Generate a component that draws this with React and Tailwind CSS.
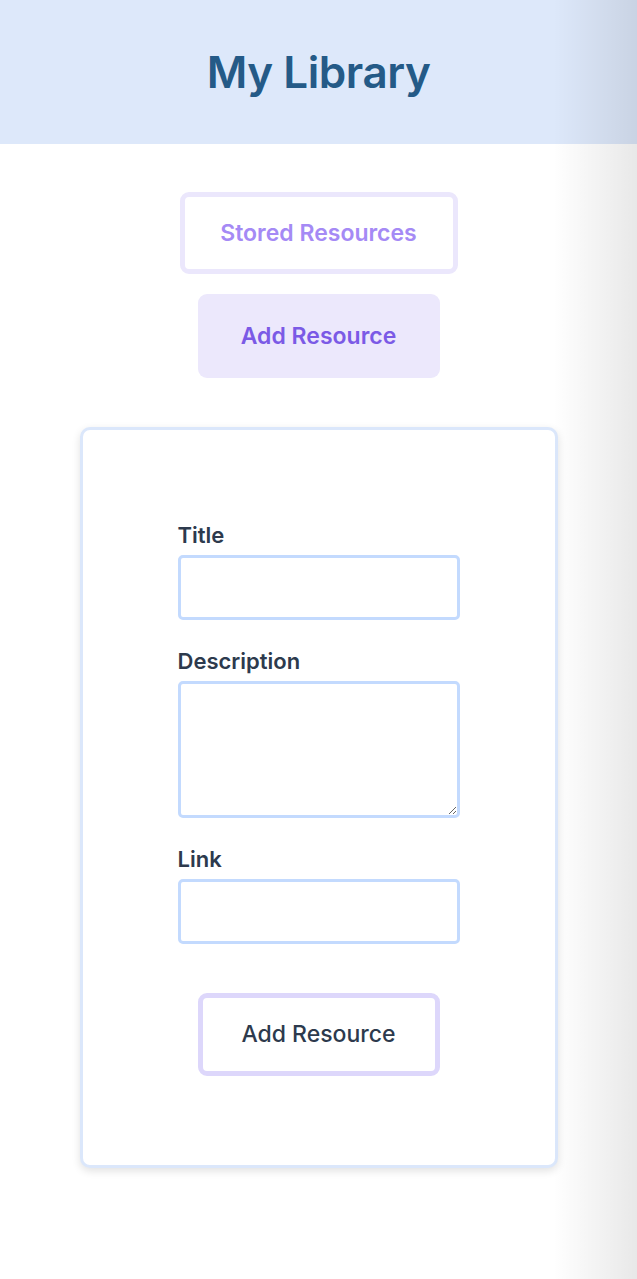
import React from "react";

function Field({ label, tall }) {
  return (
    <div className="flex flex-col">
      <label className="block text-[22px] leading-[28px] font-semibold text-[#2d3a4d]">{label}</label>
      {tall ? (
        <textarea className="mt-[6px] h-[137px] w-full resize-y rounded-[5px] border-[3px] border-[#c3dafe] bg-white" />
      ) : (
        <input type="text" className="mt-[6px] h-[65px] w-full rounded-[5px] border-[3px] border-[#c3dafe] bg-white" />
      )}
    </div>
  );
}

export default function App() {
  return (
    <div className="relative min-h-[1279px] bg-white font-['Inter','Lato','Liberation_Sans',sans-serif]">
      {/* Header */}
      <header className="flex h-[144px] items-center justify-center bg-[#dde8fa]">
        <h1 className="text-[44px] font-semibold tracking-[-0.01em] text-[#245a87]">My Library</h1>
      </header>

      <main className="flex flex-col items-center pt-[48px] pb-[110px]">
        <button
          type="button"
          className="h-[82px] w-[278px] rounded-[9px] border-[5px] border-[#ebe7fc] bg-white text-[23px] font-semibold text-[#a58af5]"
        >
          Stored Resources
        </button>
        <button
          type="button"
          className="mt-[20px] h-[84px] w-[242px] rounded-[9px] bg-[#ece8fc] text-[23px] font-semibold text-[#7b5ae6]"
        >
          Add Resource
        </button>

        {/* Form card */}
        <div className="mt-[49px] h-[741px] w-[478px] rounded-[10px] border-[3px] border-[#dbe7fb] bg-white shadow-[0_3px_8px_rgba(0,0,0,0.12)]">
          <form className="mx-auto flex w-[282px] flex-col gap-[27px] pt-[91px]" onSubmit={(e) => e.preventDefault()}>
            <Field label="Title" />
            <Field label="Description" tall />
            <Field label="Link" />
          </form>
          <div className="mt-[49px] flex justify-center">
            <button
              type="button"
              className="h-[83px] w-[242px] rounded-[9px] border-[5px] border-[#ddd7fb] bg-white text-[23px] font-medium text-[#2d3a4d]"
            >
              Add Resource
            </button>
          </div>
        </div>
      </main>

      {/* right edge fade */}
      <div className="pointer-events-none absolute right-0 top-0 h-full w-[84px] bg-gradient-to-r from-transparent to-black/[0.09]" />
    </div>
  );
}
